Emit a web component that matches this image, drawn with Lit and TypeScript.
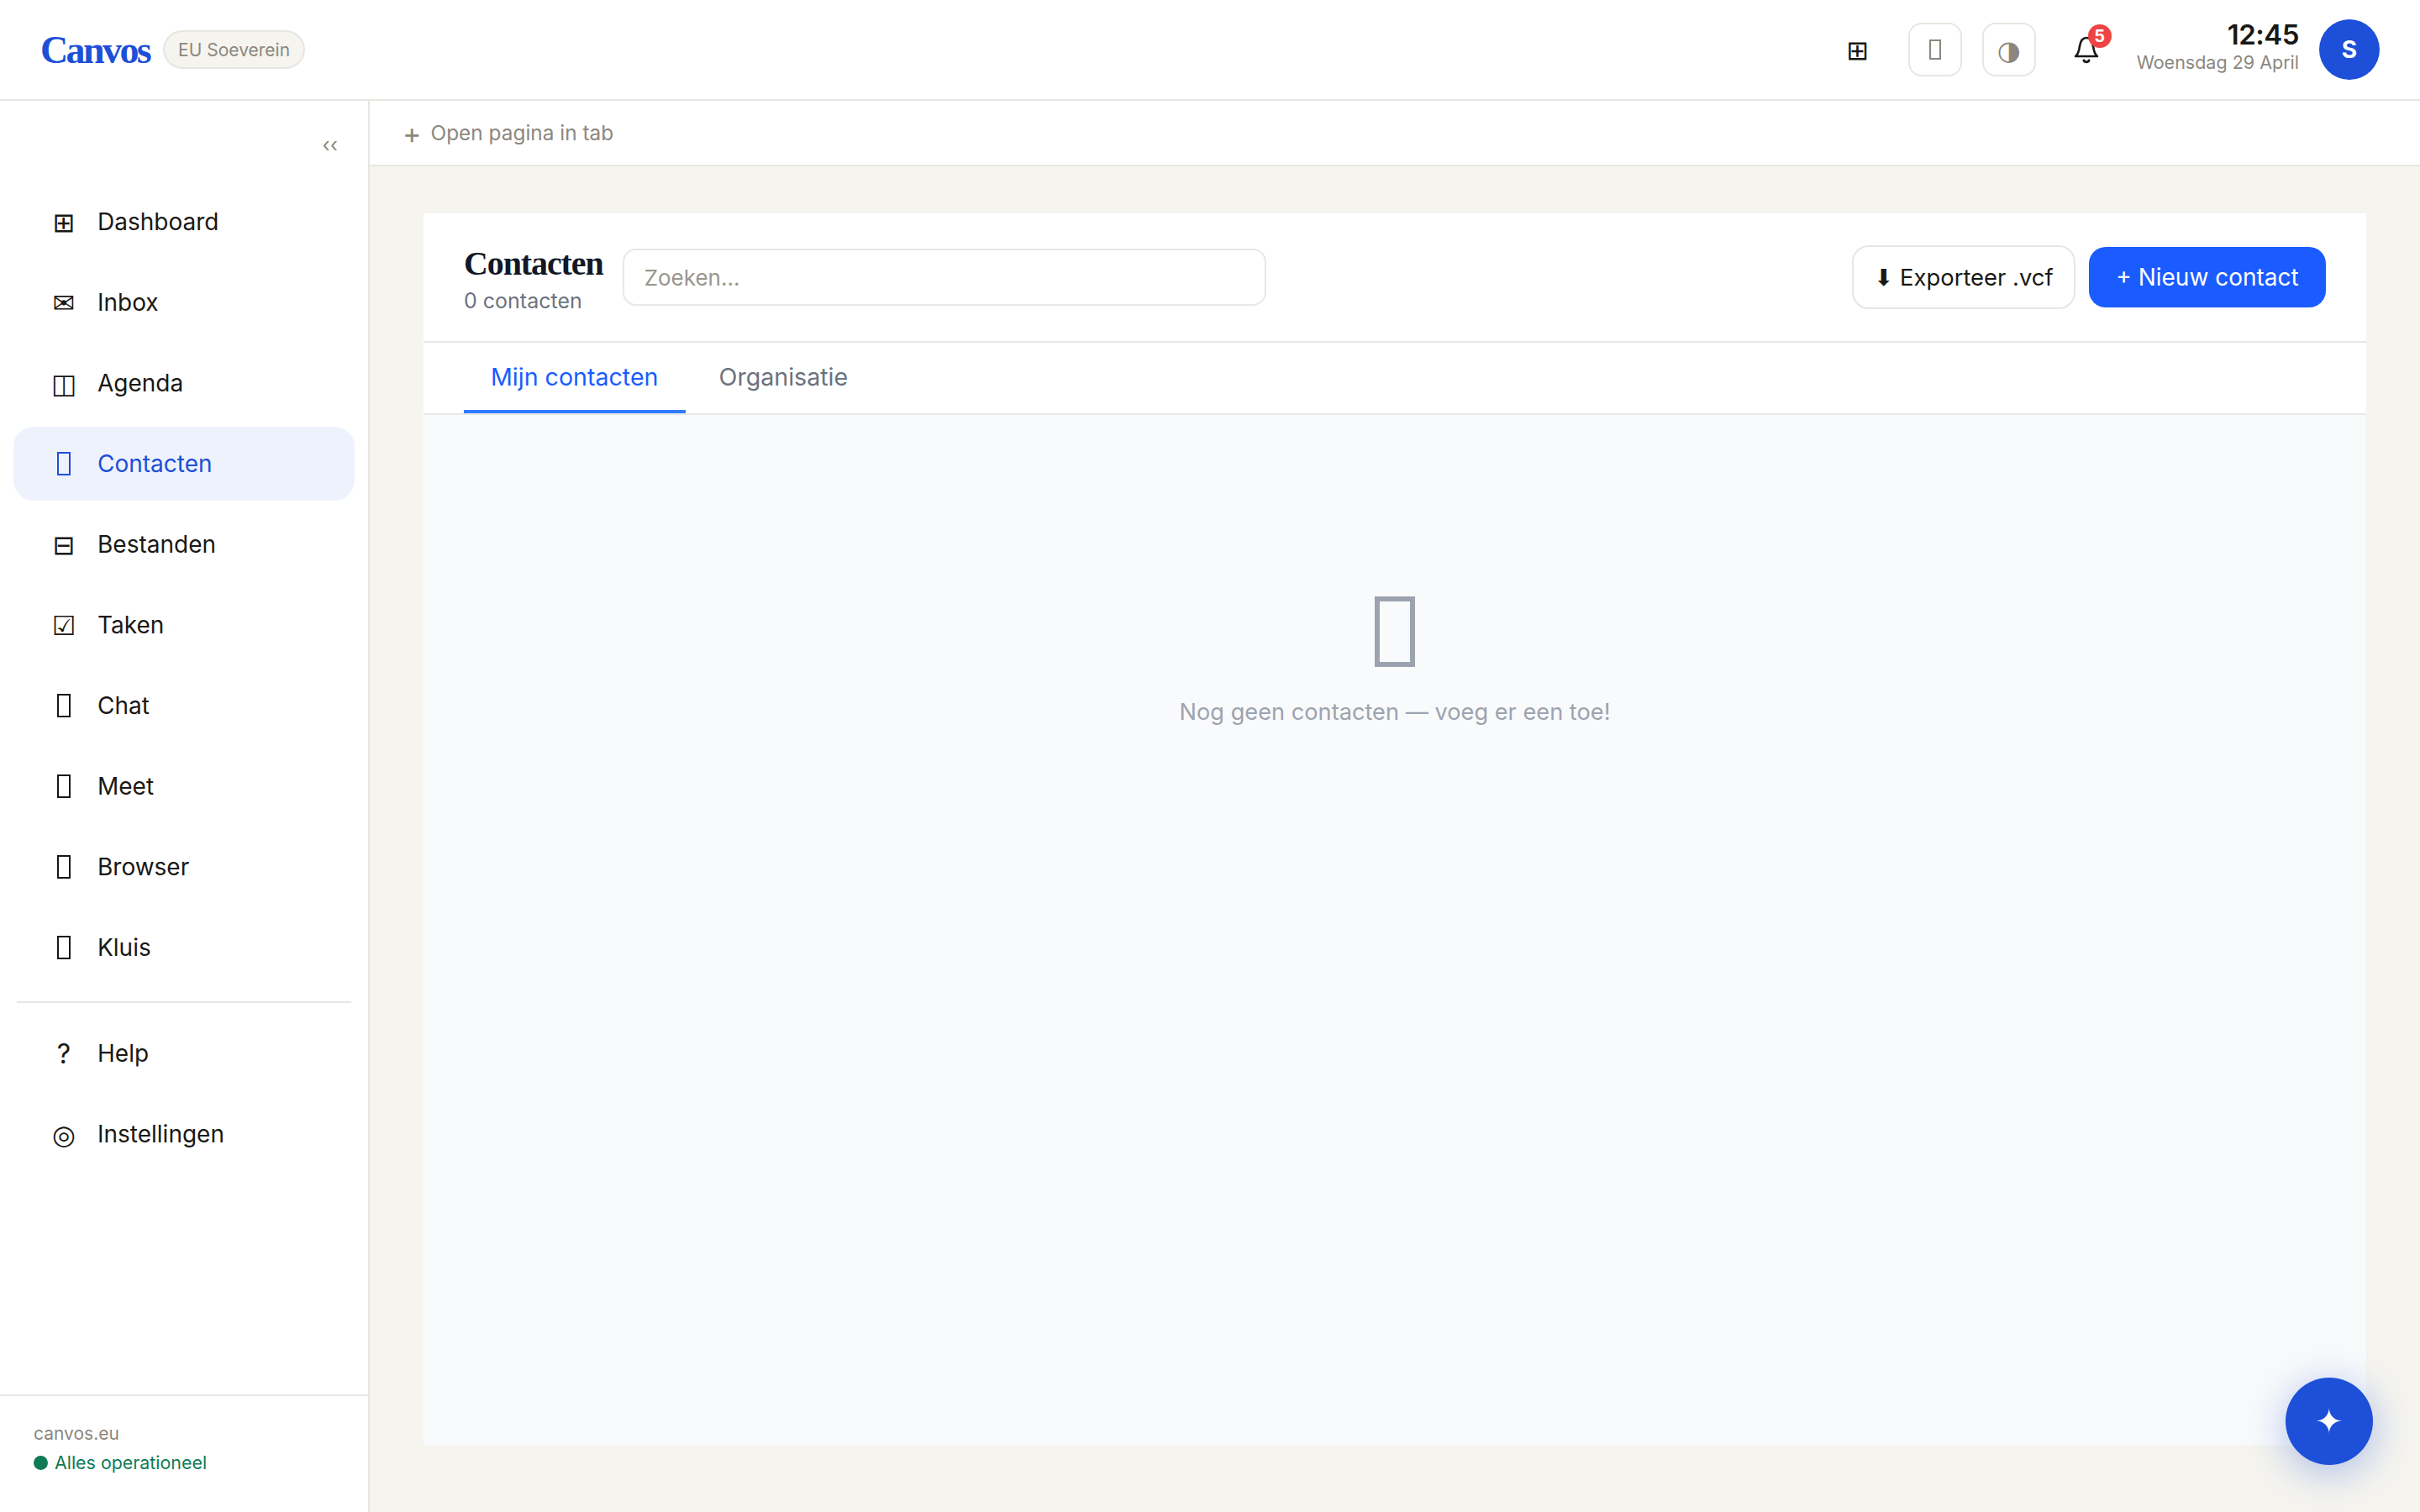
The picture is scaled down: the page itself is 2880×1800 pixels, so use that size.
import { LitElement, html, css } from 'lit'
import { customElement } from 'lit/decorators.js'

// icon: '' draws the empty "missing glyph" box the reference shows
const NAV = [
  { icon: '⊞', label: 'Dashboard' },
  { icon: '✉', label: 'Inbox' },
  { icon: '◫', label: 'Agenda' },
  { icon: '', label: 'Contacten', active: true },
  { icon: '⊟', label: 'Bestanden' },
  { icon: '☑', label: 'Taken' },
  { icon: '', label: 'Chat' },
  { icon: '', label: 'Meet' },
  { icon: '', label: 'Browser' },
  { icon: '', label: 'Kluis' },
]

const NAV_BOTTOM = [
  { icon: '?', label: 'Help' },
  { icon: '◎', label: 'Instellingen' },
]

@customElement('app-root')
export class AppRoot extends LitElement {
  navItem(item: { icon: string; label: string; active?: boolean }) {
    return html`
      <a class="nav-item ${item.active ? 'active' : ''}">
        <span class="nav-icon">${item.icon || html`<i class="tofu"></i>`}</span>
        <span>${item.label}</span>
      </a>
    `
  }

  render() {
    return html`
      <header class="topbar">
        <div class="brand">
          <span class="logo">Canvos</span>
          <span class="pill">EU Soeverein</span>
        </div>
        <div class="top-actions">
          <span class="grid-btn">⊞</span>
          <span class="square-btn"><i class="tofu"></i></span>
          <span class="square-btn contrast">◑</span>
          <span class="bell">
            <svg width="30" height="36" viewBox="0 0 30 36" fill="none" stroke="#1a1814" stroke-width="2.6" stroke-linejoin="round" stroke-linecap="round">
              <path d="M2 26c3-2 4-5 5-12 1-6 4-10 8-10s7 4 8 10c1 7 2 10 5 12z" />
              <path d="M12 31c1 2.4 5 2.4 6 0" stroke-width="3" />
            </svg>
            <span class="badge">5</span>
          </span>
          <div class="clock">
            <div class="time">12:45</div>
            <div class="date">Woensdag 29 April</div>
          </div>
          <div class="avatar">S</div>
        </div>
      </header>
      <div class="body">
        <aside class="sidebar">
          <div class="collapse">‹‹</div>
          <nav class="nav">${NAV.map((n) => this.navItem(n))}</nav>
          <div class="nav-divider"></div>
          <nav class="nav">${NAV_BOTTOM.map((n) => this.navItem(n))}</nav>
          <div class="side-foot">
            <div class="domain">canvos.eu</div>
            <div class="status"><span class="dot"></span>Alles operationeel</div>
          </div>
        </aside>
        <div class="content">
          <div class="tabstrip"><span class="plus">+</span><span>Open pagina in tab</span></div>
          <main class="main">
            <section class="card">
              <div class="card-head">
                <div class="title-block">
                  <div class="title">Contacten</div>
                  <div class="count">0 contacten</div>
                </div>
                <div class="search">Zoeken…</div>
                <div class="card-actions">
                  <button class="btn-outline">⬇ Exporteer .vcf</button>
                  <button class="btn-primary">+ Nieuw contact</button>
                </div>
              </div>
              <div class="tabs">
                <span class="tab current">Mijn contacten</span>
                <span class="tab">Organisatie</span>
              </div>
              <div class="empty">
                <i class="tofu empty-icon"></i>
                <div class="empty-text">Nog geen contacten — voeg er een toe!</div>
              </div>
            </section>
          </main>
        </div>
      </div>
      <button class="fab">✦</button>
    `
  }

  static styles = css`
    :host {
      display: flex;
      flex-direction: column;
      height: 1800px;
      overflow: hidden;
      background: #f5f4ef;
      color: #1a1814;
      font-family: Inter, 'DejaVu Sans', sans-serif;
      --line: #e8e6e0;
      --muted: #8c877e;
      --blue: #1d4fd8;
    }
    .tofu {
      display: block;
      box-sizing: border-box;
      width: 0.5em;
      height: 0.875em;
      border: 0.0625em solid currentColor;
    }
    .topbar {
      height: 118px;
      flex: none;
      display: flex;
      align-items: center;
      justify-content: space-between;
      padding: 0 48px;
      background: #fff;
      border-bottom: 2px solid var(--line);
    }
    .brand {
      display: flex;
      align-items: center;
      gap: 16px;
    }
    .logo {
      font-family: 'Liberation Serif', serif;
      font-weight: 700;
      font-size: 46px;
      letter-spacing: -2.6px;
      color: var(--blue);
    }
    .pill {
      height: 46px;
      box-sizing: border-box;
      display: flex;
      align-items: center;
      padding: 0 16px;
      border: 2px solid var(--line);
      border-radius: 23px;
      background: #f5f4ef;
      color: var(--muted);
      font-size: 21px;
    }
    .top-actions {
      display: flex;
      align-items: center;
      gap: 24px;
    }
    .grid-btn {
      width: 72px;
      text-align: center;
      font-size: 32px;
    }
    .square-btn {
      width: 64px;
      height: 64px;
      box-sizing: border-box;
      display: flex;
      align-items: center;
      justify-content: center;
      border: 2px solid var(--line);
      border-radius: 16px;
      color: var(--muted);
      font-size: 28px;
    }
    .square-btn .tofu {
      border-width: 2px;
    }
    .square-btn.contrast {
      font-size: 32px;
    }
    .bell {
      position: relative;
      width: 72px;
      height: 64px;
      display: flex;
      align-items: center;
      justify-content: center;
    }
    .badge {
      position: absolute;
      top: 2px;
      right: 6px;
      width: 28px;
      height: 28px;
      border-radius: 50%;
      background: #ef4444;
      color: #fff;
      font-size: 20px;
      font-weight: 700;
      display: flex;
      align-items: center;
      justify-content: center;
    }
    .clock {
      text-align: right;
      margin-bottom: 6px;
    }
    .time {
      font-size: 33px;
      font-weight: 600;
      line-height: 36px;
      letter-spacing: -0.5px;
    }
    .date {
      font-size: 21.5px;
      line-height: 30px;
      color: var(--muted);
    }
    .avatar {
      width: 72px;
      height: 72px;
      border-radius: 50%;
      background: var(--blue);
      color: #fff;
      font-size: 28px;
      font-weight: 700;
      display: flex;
      align-items: center;
      justify-content: center;
    }
    .body {
      flex: 1;
      min-height: 0;
      display: flex;
    }
    .sidebar {
      width: 440px;
      flex: none;
      box-sizing: border-box;
      display: flex;
      flex-direction: column;
      background: #fff;
      border-right: 2px solid var(--line);
    }
    .collapse {
      height: 100px;
      box-sizing: border-box;
      padding: 37px 36px 0 0;
      text-align: right;
      font-size: 24px;
      line-height: 32px;
      color: var(--muted);
    }
    .nav {
      display: flex;
      flex-direction: column;
      gap: 8px;
      padding: 0 16px;
    }
    .nav-item {
      height: 88px;
      display: flex;
      align-items: center;
      gap: 20px;
      padding: 0 40px;
      border-radius: 24px;
      font-size: 28px;
    }
    .nav-item.active {
      background: #eef2fd;
      color: var(--blue);
    }
    .nav-icon {
      width: 40px;
      display: flex;
      justify-content: center;
      font-size: 32px;
    }
    .nav-divider {
      height: 2px;
      margin: 20px 20px 16px;
      background: var(--line);
    }
    .side-foot {
      margin-top: auto;
      height: 140px;
      box-sizing: border-box;
      padding: 28px 40px 0;
      border-top: 2px solid var(--line);
      font-size: 21px;
    }
    .domain {
      color: var(--muted);
      line-height: 34px;
    }
    .status {
      display: flex;
      align-items: center;
      gap: 8px;
      color: #0f7b55;
      line-height: 34px;
      font-size: 21.4px;
    }
    .dot {
      width: 17px;
      height: 17px;
      border-radius: 50%;
      background: #0f7b55;
    }
    .content {
      flex: 1;
      min-width: 0;
      display: flex;
      flex-direction: column;
    }
    .tabstrip {
      height: 76px;
      flex: none;
      display: flex;
      align-items: center;
      gap: 11px;
      padding: 0 39px;
      background: #fff;
      border-bottom: 2px solid var(--line);
      color: var(--muted);
      font-size: 24.4px;
    }
    .plus {
      font-size: 34px;
    }
    .main {
      flex: 1;
      min-height: 0;
      display: flex;
      padding: 56px 64px 80px;
    }
    .card {
      flex: 1;
      display: flex;
      flex-direction: column;
      background: #fff;
    }
    .card-head {
      height: 152px;
      flex: none;
      display: flex;
      align-items: center;
      gap: 23px;
      padding: 0 48px;
      border-bottom: 2px solid #e5e7eb;
    }
    .title-block {
      padding-top: 6px;
    }
    .title {
      font-family: 'Liberation Serif', serif;
      font-weight: 700;
      font-size: 40px;
      letter-spacing: -1.1px;
      color: #111827;
      line-height: 50px;
    }
    .count {
      font-size: 25px;
      color: #6b7280;
      line-height: 38px;
    }
    .search {
      width: 766px;
      height: 68px;
      box-sizing: border-box;
      display: flex;
      align-items: center;
      padding: 0 24px;
      border: 2px solid #e5e7eb;
      border-radius: 16px;
      color: #9a958c;
      font-size: 26px;
    }
    .card-actions {
      margin-left: auto;
      display: flex;
      align-items: center;
      gap: 16px;
    }
    .btn-outline,
    .btn-primary {
      font-family: inherit;
      border-radius: 20px;
      box-sizing: border-box;
    }
    .btn-outline {
      height: 76px;
      width: 266px;
      padding: 0;
      background: #fff;
      border: 2px solid var(--line);
      color: #1a1814;
      font-size: 27.4px;
    }
    .btn-primary {
      height: 72px;
      width: 282px;
      padding: 0;
      background: #1a5cff;
      border: 0;
      color: #fff;
      font-size: 28px;
    }
    .tabs {
      height: 84px;
      flex: none;
      display: flex;
      gap: 8px;
      padding: 0 48px;
      border-bottom: 2px solid #e5e7eb;
    }
    .tab {
      box-sizing: border-box;
      display: flex;
      align-items: center;
      padding: 0 32px;
      border-bottom: 4px solid transparent;
      color: #6b7280;
      font-size: 28.6px;
    }
    .tab.current {
      color: #1a5cff;
      border-bottom-color: #2f7bff;
    }
    .empty {
      flex: 1;
      background: #f9fafb;
      display: flex;
      flex-direction: column;
      align-items: center;
      padding-top: 216px;
      color: #9ca3af;
    }
    .empty-icon {
      font-size: 96px;
    }
    .empty-text {
      margin-top: 34px;
      font-size: 27.2px;
      line-height: 40px;
    }
    .fab {
      position: fixed;
      right: 56px;
      bottom: 56px;
      width: 104px;
      height: 104px;
      border: 0;
      border-radius: 50%;
      background: var(--blue);
      color: #fff;
      font-size: 40px;
      box-shadow: 0 8px 48px rgba(29, 79, 216, 0.35);
    }
  `
}
